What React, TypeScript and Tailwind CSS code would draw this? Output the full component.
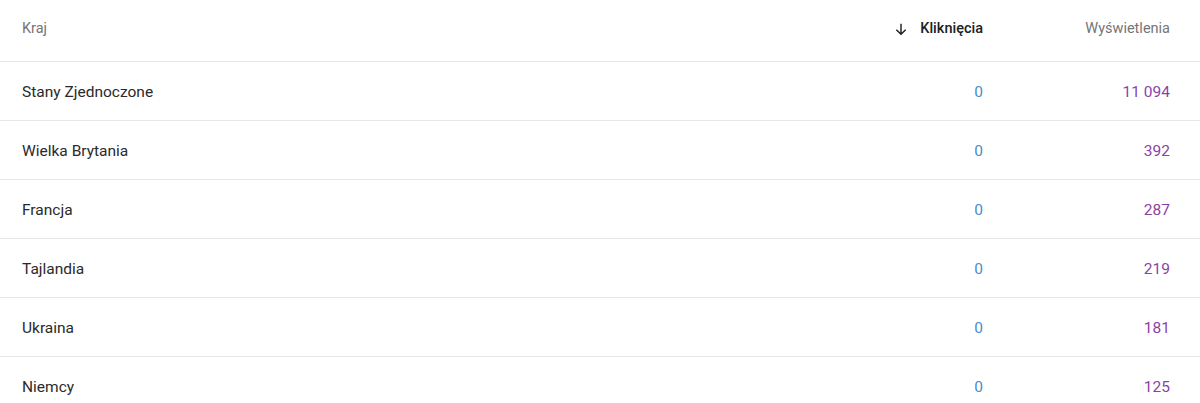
import React from "react";

const rows = [
  { c: "Stany Zjednoczone", k: "0", w: "11 094" },
  { c: "Wielka Brytania", k: "0", w: "392" },
  { c: "Francja", k: "0", w: "287" },
  { c: "Tajlandia", k: "0", w: "219" },
  { c: "Ukraina", k: "0", w: "181" },
  { c: "Niemcy", k: "0", w: "125" },
];

export default function App() {
  return (
    <div className="w-[1200px] h-[403px] bg-white overflow-hidden" style={{ fontFamily: "Roboto, 'Liberation Sans', sans-serif" }}>
      <div className="flex items-center h-[62px] border-b border-[#e6e6e6] pl-[22px] pr-[30px] text-[14.5px] pb-[4px]">
        <div className="flex-1 text-[#757575]">Kraj</div>
        <div className="w-[200px] flex items-center justify-end gap-[11px] text-[#202124] font-medium">
          <svg width="16" height="16" viewBox="0 0 24 24" fill="none" stroke="#202124" strokeWidth="2.2">
            <path d="M12 4v16M5 13l7 7 7-7" />
          </svg>
          <span>Kliknięcia</span>
        </div>
        <div className="w-[187px] text-right text-[#757575]">Wyświetlenia</div>
      </div>
      {rows.map((r) => (
        <div key={r.c} className="flex items-center h-[59px] border-b border-[#e6e6e6] pl-[22px] pr-[30px] pt-[4px] text-[15.5px]">
          <div className="flex-1 text-[#2a2a2a]">{r.c}</div>
          <div className="w-[200px] text-right text-[#4a8ccb]">{r.k}</div>
          <div className="w-[187px] text-right text-[#8b3fa8]">{r.w}</div>
        </div>
      ))}
    </div>
  );
}
